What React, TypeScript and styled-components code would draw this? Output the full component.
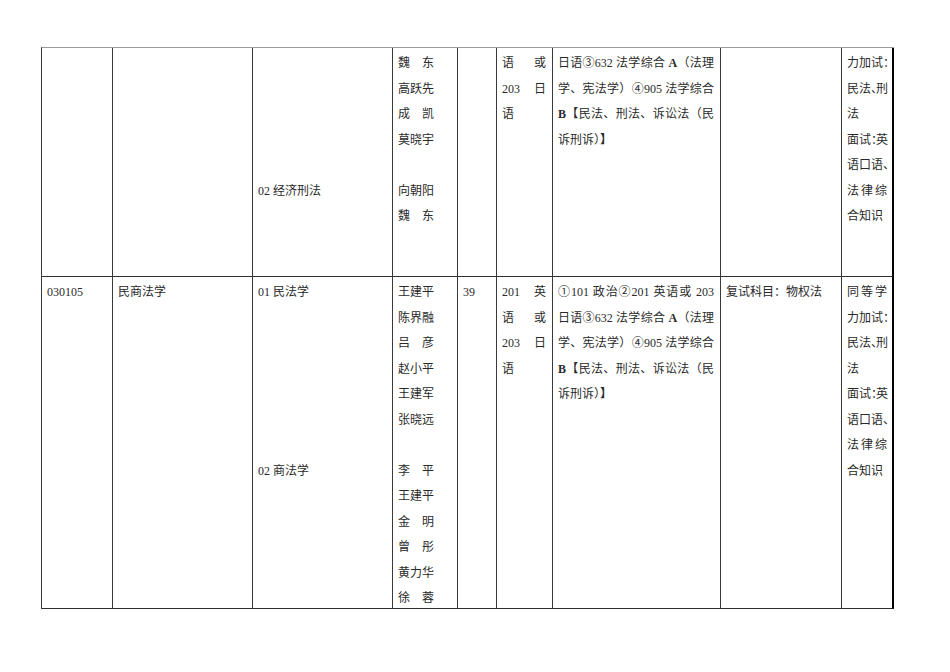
import React, { ReactNode } from "react";
import styled, { createGlobalStyle, css } from "styled-components";

const GlobalStyle = createGlobalStyle`
  body {
    margin: 0;
    background: #ffffff;
    font-family: "Liberation Serif", "Noto Sans CJK SC", serif;
    font-size: 12px;
    color: #2a2a2a;
  }
`;

const Page = styled.div`
  padding: 47px 0 0 41px;
`;

// 9 columns, each width includes its right border
const Sheet = styled.div`
  display: grid;
  grid-template-columns: 71px 140px 140px 65px 39px 56px 168px 121px 52px;
  grid-template-rows: 229px 332px;
  width: max-content;
  border-top: 1px solid #9a9a9a;
  border-left: 1px solid #3a3a3a;
`;

const Cell = styled.div<{ $last?: boolean }>`
  box-sizing: border-box;
  overflow: hidden;
  padding: 3px 6px 0 5px;
  border-bottom: 1px solid #2e2e2e;
  border-right: 1px solid #3a3a3a;
  ${(p) =>
    p.$last &&
    css`
      border-right: 2px solid #000000;
      padding-right: 5px;
    `}
`;

const Line = styled.div<{ $fill?: boolean }>`
  height: 25.5px;
  line-height: 25.5px;
  white-space: nowrap;
  ${(p) =>
    p.$fill &&
    css`
      white-space: normal;
      text-align: justify;
      text-align-last: justify;
      text-justify: inter-character;
    `}
`;

const Bold = styled.b`
  font-weight: 700;
`;

// full-width punctuation squeezed like in the printed table
const Squeeze = styled.span`
  letter-spacing: -7px;
`;

type LineSpec = string | { text: ReactNode; fill?: boolean };

const J = (text: ReactNode): LineSpec => ({ text, fill: true });
const N = (text: ReactNode): LineSpec => ({ text });

function Lines({ lines }: { lines: LineSpec[] }) {
  return (
    <>
      {lines.map((l, i) => {
        const spec = typeof l === "string" ? { text: l, fill: false } : l;
        return (
          <Line key={i} $fill={spec.fill}>
            {spec.text === "" ? "\u00a0" : spec.text}
          </Line>
        );
      })}
    </>
  );
}

const exam: LineSpec[] = [
  J("①101 政治②201 英语或 203"),
  J(<>日语③632 法学综合 <Bold>A</Bold>（法理</>),
  J("学、宪法学）④905 法学综合"),
  J(<><Bold>B</Bold>【民法、刑法、诉讼法（民</>),
  N(<>诉刑诉）<Bold>】</Bold></>),
];

const language: LineSpec[] = [J("201 英"), J("语或"), J("203 日"), "语"];

const extra: LineSpec[] = [
  J("同等学"),
  N(<>力加试<Squeeze>：</Squeeze></>),
  N(<>民法<Squeeze>、</Squeeze>刑</>),
  "法",
  N(<>面试<Squeeze>：</Squeeze>英</>),
  N(<>语口语<Squeeze>、</Squeeze></>),
  J("法律综"),
  "合知识",
];

const rows: LineSpec[][][] = [
  [
    [],
    [],
    ["", "", "", "", "", "02 经济刑法"],
    ["魏　东", "高跃先", "成　凯", "莫晓宇", "", "向朝阳", "魏　东"],
    [],
    language.slice(1),
    exam.slice(1),
    [],
    extra.slice(1),
  ],
  [
    ["030105"],
    ["民商法学"],
    ["01 民法学", "", "", "", "", "", "", "02 商法学"],
    [
      "王建平", "陈界融", "吕　彦", "赵小平", "王建军", "张晓远", "",
      "李　平", "王建平", "金　明", "曾　彤", "黄力华", "徐　蓉",
    ],
    ["39"],
    language,
    exam,
    ["复试科目：物权法"],
    extra,
  ],
];

export default function App() {
  return (
    <>
      <GlobalStyle />
      <Page>
        <Sheet>
          {rows.map((row, r) =>
            row.map((cell, c) => (
              <Cell key={`${r}-${c}`} $last={c === row.length - 1}>
                <Lines lines={cell} />
              </Cell>
            ))
          )}
        </Sheet>
      </Page>
    </>
  );
}
